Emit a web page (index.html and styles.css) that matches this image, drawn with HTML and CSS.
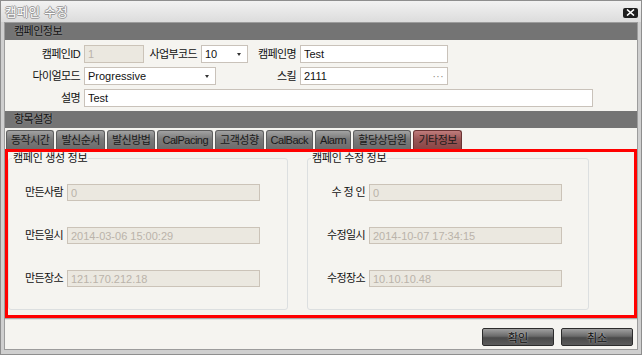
FILE: index.html
```html
<!DOCTYPE html>
<html lang="ko">
<head>
  <meta charset="UTF-8">
  <meta name="viewport" content="width=device-width, initial-scale=1.0">
  <title>캠페인 수정</title>
  <link rel="stylesheet" href="styles.css">
</head>
<body>
  <div class="window">
    <div class="titlebar">
      <span class="title">캠페인 수정</span>
      <span class="close-btn">
        <svg width="9" height="7" viewBox="0 0 9 7"><path d="M1 0.5 L8 6.5 M8 0.5 L1 6.5" stroke="#fff" stroke-width="1.6"/></svg>
      </span>
    </div>

    <div class="frame">
      <div class="section-head">캠페인정보</div>
      <div class="campaign-form">
        <div class="form-row">
          <label class="lbl lbl-first">캠페인ID</label>
          <input class="field field-disabled w-id" type="text" value="1" readonly>
          <label class="lbl lbl-biz">사업부코드</label>
          <div class="field select w-biz"><span>10</span><i class="arrow"></i></div>
          <label class="lbl lbl-name">캠페인명</label>
          <input class="field w-name" type="text" value="Test" readonly>
        </div>
        <div class="form-row">
          <label class="lbl lbl-first">다이얼모드</label>
          <div class="field select w-dial"><span>Progressive</span><i class="arrow"></i></div>
          <label class="lbl lbl-skill">스킬</label>
          <div class="field w-name skill"><span>2111</span><span class="dots">···</span></div>
        </div>
        <div class="form-row">
          <label class="lbl lbl-first">설명</label>
          <input class="field w-desc" type="text" value="Test" readonly>
        </div>
      </div>

      <div class="section-head">항목설정</div>
      <div class="tabs">
        <span class="tab">동작시간</span>
        <span class="tab">발신순서</span>
        <span class="tab">발신방법</span>
        <span class="tab">CalPacing</span>
        <span class="tab">고객성향</span>
        <span class="tab">CalBack</span>
        <span class="tab">Alarm</span>
        <span class="tab">할당상담원</span>
        <span class="tab tab-active">기타정보</span>
      </div>

      <div class="tab-panel">
        <fieldset class="group group-left">
          <legend>캠페인 생성 정보</legend>
          <div class="info-grid">
            <label class="lbl">만든사람</label>
            <input class="field field-disabled" type="text" value="0" readonly>
            <label class="lbl">만든일시</label>
            <input class="field field-disabled" type="text" value="2014-03-06 15:00:29" readonly>
            <label class="lbl">만든장소</label>
            <input class="field field-disabled" type="text" value="121.170.212.18" readonly>
          </div>
        </fieldset>
        <fieldset class="group group-right">
          <legend>캠페인 수정 정보</legend>
          <div class="info-grid">
            <label class="lbl">수 정 인</label>
            <input class="field field-disabled" type="text" value="0" readonly>
            <label class="lbl">수정일시</label>
            <input class="field field-disabled" type="text" value="2014-10-07 17:34:15" readonly>
            <label class="lbl">수정장소</label>
            <input class="field field-disabled" type="text" value="10.10.10.48" readonly>
          </div>
        </fieldset>
      </div>

      <div class="footer">
        <button class="btn">확인</button>
        <button class="btn">취소</button>
      </div>
    </div>
  </div>
</body>
</html>
```

FILE: styles.css
```css
body {
  margin: 0;
  width: 642px;
  height: 355px;
  overflow: hidden;
  font-family: "Liberation Sans", "Noto Sans CJK KR", sans-serif;
  font-size: 11px;
  color: #111;
}

.window {
  box-sizing: border-box;
  height: 355px;
  border: 1px solid #8e8e8e;
  background-color: #cfcfcf;
  display: flex;
  flex-direction: column;
}

/* Title bar */
.titlebar {
  height: 21px;
  flex-shrink: 0;
  display: flex;
  align-items: center;
  justify-content: space-between;
  padding: 0 3px 0 4px;
  background: linear-gradient(#f2f2f2, #dcdcdc);
}

.title {
  font-size: 12.5px;
  color: #fdfdfd;
  letter-spacing: 0.3px;
  text-shadow: 1px 0 #9a9a9a, -1px 0 #9a9a9a, 0 1px #9a9a9a, 0 -1px #9a9a9a;
}

.close-btn {
  width: 15px;
  height: 10px;
  margin-top: 2px;
  border-radius: 2px;
  background-color: #1e1e1e;
  display: flex;
  align-items: center;
  justify-content: center;
}

/* Frame */
.frame {
  flex: 1;
  margin: 0 3px 4px;
  border: 1px solid #9c9c9c;
  background-color: #f5f4f0;
  display: flex;
  flex-direction: column;
}

.section-head {
  height: 17px;
  line-height: 17px;
  padding-left: 9px;
  background-color: #747474;
  color: #111;
  letter-spacing: -0.5px;
  text-shadow: 0 0 2px rgba(255, 255, 255, 0.3);
}

/* Top form */
.campaign-form {
  padding: 5px 0 4px;
  display: flex;
  flex-direction: column;
  gap: 4px;
}

.form-row {
  display: flex;
  height: 18px;
}

.lbl {
  box-sizing: border-box;
  padding-right: 4px;
  text-align: right;
  line-height: 18px;
  letter-spacing: -0.6px;
  white-space: nowrap;
}

.lbl-first { width: 79px; }
.lbl-biz { width: 57px; }
.lbl-name { width: 52px; }
.lbl-skill { width: 84px; }

.field {
  box-sizing: border-box;
  height: 18px;
  margin: 0;
  padding: 0 3px;
  border: 1px solid #c9c2ba;
  background-color: #fff;
  font-family: "Liberation Sans", "Noto Sans CJK KR", sans-serif;
  font-size: 11px;
  color: #111;
  outline: none;
}

.field-disabled {
  background-color: #ebe8e0;
  border-color: #cbc3b8;
  color: #bab3aa;
}

.w-id { width: 60px; }
.w-biz { width: 47px; }
.w-name { width: 148px; }
.w-dial { width: 132px; }
.w-desc { width: 509px; }

.select,
.skill {
  display: flex;
  align-items: center;
  justify-content: space-between;
}

.arrow {
  width: 0;
  height: 0;
  margin-right: 3px;
  border-left: 2.5px solid transparent;
  border-right: 2.5px solid transparent;
  border-top: 3px solid #333;
}

.dots {
  color: #8a8275;
  font-size: 10px;
  letter-spacing: 0.5px;
}

/* Tabs */
.tabs {
  height: 21px;
  box-sizing: border-box;
  padding: 2px 0 0 1px;
  display: flex;
  align-items: flex-end;
  gap: 2px;
}

.tab {
  box-sizing: border-box;
  height: 19px;
  line-height: 18px;
  padding: 0 4px;
  border: 1px solid #5e5e5e;
  border-bottom: none;
  border-radius: 3px 3px 0 0;
  background: linear-gradient(#a2a2a2, #7a7a7a 45%, #6c6c6c);
  color: #1a1a1a;
  letter-spacing: -0.5px;
  white-space: nowrap;
}

.tab-active {
  border-color: #6a3434;
  background: linear-gradient(#c07c7c, #9a5656 45%, #884646);
}

/* Tab panel */
.tab-panel {
  height: 169px;
  box-sizing: border-box;
  border: 3px solid #ff0000;
  padding: 0 0 5px 0;
  display: flex;
  gap: 19px;
}

.group {
  margin: 0;
  padding: 19px 0 21px;
  border: 1px solid #dcdfe0;
  border-radius: 3px;
}

.group legend {
  margin-left: 3px;
  padding: 0 1px;
  line-height: 13px;
  letter-spacing: -0.3px;
}

.group-left { width: 280px; box-sizing: border-box; }
.group-right { width: 282px; box-sizing: border-box; }

.info-grid {
  display: grid;
  grid-template-columns: 54px 193px;
  column-gap: 4px;
  row-gap: 26px;
  align-items: center;
}

.group-right .info-grid {
  grid-template-columns: 57px 193px;
}

.info-grid .lbl {
  padding-right: 0;
  line-height: 17px;
}

.info-grid .field {
  height: 17px;
  font-size: 11px;
}

/* Footer */
.footer {
  flex: 1;
  border-top: 1px solid #a8a8a8;
  box-shadow: inset 0 1px #e2e2e2;
  display: flex;
  justify-content: flex-end;
  align-items: flex-start;
  gap: 7px;
  padding: 9px 4px 0 0;
}

.btn {
  width: 72px;
  height: 18px;
  padding: 0;
  border: 1px solid #2c2c2c;
  border-radius: 2px;
  background: linear-gradient(#a0a0a0, #6a6a6a 45%, #4a4a4a 55%, #5c5c5c);
  font-family: "Noto Sans CJK KR", sans-serif;
  font-size: 11px;
  color: #0c0c0c;
  text-shadow: 0 0 2px #d8d8d8;
  cursor: pointer;
}
```
